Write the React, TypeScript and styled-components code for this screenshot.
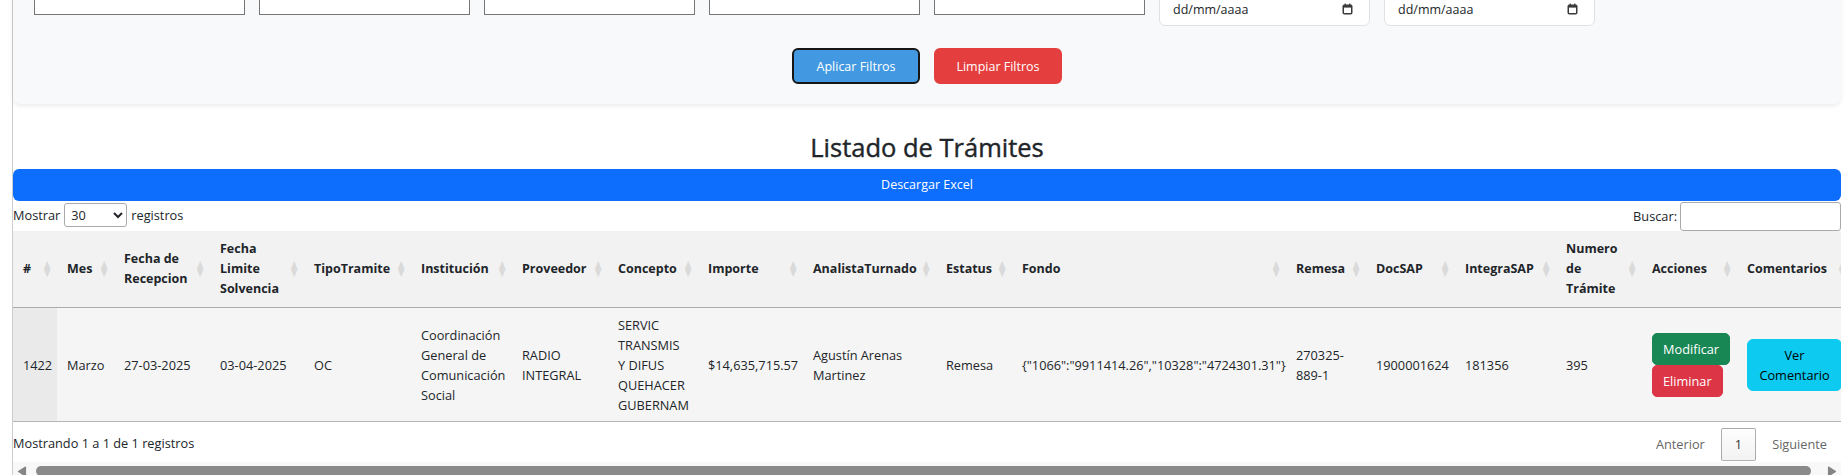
import React from "react";
import styled, { createGlobalStyle, css } from "styled-components";

const GlobalStyle = createGlobalStyle`
  html, body { margin: 0; padding: 0; overflow: hidden; background: #fff; }
  body {
    font-family: "Open Sans", "Noto Sans", sans-serif;
    font-size: 12.75px;
    color: #212529;
  }
  *, *::before, *::after { box-sizing: border-box; }
`;

const Page = styled.div`
  padding: 0 7px 0 12px;
`;

const Main = styled.main`
  border-left: 1px solid #cdcdcd;
  min-height: 100vh;
`;

/* ---------- filter card ---------- */
const FilterCard = styled.section`
  margin-top: -29px;
  background: #f8f9fa;
  border-radius: 8px;
  box-shadow: 0 2px 4px rgba(0, 0, 0, 0.08);
  padding: 21px 21px 20px;
`;

const FilterGrid = styled.div`
  display: grid;
  grid-template-columns: repeat(8, 1fr);
  column-gap: 14px;
  align-items: start;
`;

const TextField = styled.input`
  display: block;
  width: 100%;
  height: 23px;
  border: 1px solid #767676;
  border-radius: 0;
  background: #fff;
  padding: 1px 3px;
  font: inherit;
`;

const DateField = styled.div`
  display: flex;
  align-items: center;
  justify-content: space-between;
  height: 34px;
  padding: 0 16px 0 13px;
  background: #fff;
  border: 1px solid #dee2e6;
  border-radius: 6px;
  font-size: 12.5px;
  color: #212529;
`;

const ButtonRow = styled.div`
  display: flex;
  justify-content: center;
  gap: 14px;
  margin-top: 22px;
`;

const FilterButton = styled.button<{ $variant: "apply" | "clear" }>`
  width: 128px;
  height: 36px;
  border-radius: 6px;
  font-family: inherit;
  font-size: 12.5px;
  color: #fff;
  cursor: pointer;
  ${(p) =>
    p.$variant === "apply"
      ? css`
          background: #4299e1;
          border: 2px solid #161616;
        `
      : css`
          background: #e53e3e;
          border: 2px solid #e53e3e;
        `}
`;

/* ---------- title & export ---------- */
const Title = styled.h2`
  margin: 28px 0 6px;
  text-align: center;
  font-size: 25.5px;
  font-weight: 400;
  -webkit-text-stroke: 0.4px #212529;
  line-height: 1.2;
  color: #212529;
`;

const ExportButton = styled.button`
  display: block;
  width: 100%;
  height: 32px;
  border: none;
  border-radius: 6px;
  background: #0d6efd;
  color: #fff;
  font-family: inherit;
  font-size: 12.5px;
  cursor: pointer;
`;

/* ---------- datatable wrapper ---------- */
const TableScroller = styled.div`
  margin-top: 1px;
  overflow: hidden;
`;

const TableWrapper = styled.div`
  width: 100%;
`;

const ControlsRow = styled.div`
  display: flex;
  justify-content: space-between;
  align-items: flex-start;
  height: 29px;
`;

const LengthLabel = styled.label`
  display: flex;
  align-items: center;
  gap: 4px;
  height: 26px;
  white-space: nowrap;
`;

const LengthSelect = styled.select`
  width: 63px;
  height: 24px;
  padding: 0 2px;
  border: 1px solid #aaa;
  border-radius: 3px;
  background: #fff;
  font-family: inherit;
  font-size: 12.75px;
  color: #212529;
`;

const SearchLabel = styled.label`
  display: flex;
  align-items: center;
  white-space: nowrap;
`;

const SearchInput = styled.input`
  width: 161px;
  height: 29px;
  margin-left: 3px;
  padding: 5px;
  border: 1px solid #aaa;
  border-radius: 3px;
  background: transparent;
  font: inherit;
`;

const DataTable = styled.table<{ $width: number }>`
  width: ${(p) => p.$width}px;
  table-layout: fixed;
  border-collapse: separate;
  border-spacing: 0;
`;

const Col = styled.col<{ $w: number }>`
  width: ${(p) => p.$w}px;
`;

const HeadCell = styled.th`
  position: relative;
  background: #f2f2f2;
  text-align: left;
  vertical-align: middle;
  font-weight: 700;
  font-size: 12.5px;
  line-height: 20px;
  padding: 8px 26px 8px 10px;
  border-bottom: 1px solid #ababab;
  color: #212529;

  &::before,
  &::after {
    position: absolute;
    right: 6px;
    font-family: "DejaVu Sans", sans-serif;
    font-size: 11px;
    line-height: 8px;
    font-weight: 400;
    transform: scaleX(0.8);
    color: #dadada;
  }
  &::before {
    content: "▲";
    bottom: 50%;
  }
  &::after {
    content: "▼";
    top: 50%;
  }
`;

const Cell = styled.td<{ $sorted?: boolean; $nowrap?: boolean }>`
  background: ${(p) => (p.$sorted ? "#eaeaea" : "#f5f5f5")};
  padding: 7px 10px 6px;
  line-height: 20px;
  vertical-align: middle;
  border-bottom: 1px solid #b5b5b5;
  white-space: ${(p) => (p.$nowrap ? "nowrap" : "normal")};
`;

const ActionStack = styled.div`
  display: flex;
  flex-direction: column;
  align-items: flex-start;
`;

const RowButton = styled.button<{ $tone: "success" | "danger" | "info" }>`
  padding: 5px 10px;
  font-family: inherit;
  font-size: 12.75px;
  line-height: 20px;
  border-radius: 5px;
  border: 1px solid;
  cursor: pointer;
  ${(p) =>
    p.$tone === "success"
      ? css`
          background: #198754;
          border-color: #198754;
          color: #fff;
        `
      : p.$tone === "danger"
      ? css`
          background: #dc3545;
          border-color: #dc3545;
          color: #fff;
        `
      : css`
          background: #0dcaf0;
          border-color: #0dcaf0;
          color: #000;
          border-radius: 6px;
        `}
`;

const FooterRow = styled.div`
  display: flex;
  justify-content: space-between;
  align-items: flex-start;
  padding-bottom: 1px;
`;

const Info = styled.div`
  padding-top: 11px;
  line-height: 20px;
`;

const Paginate = styled.div`
  display: flex;
  padding-top: 6px;
`;

const PageButton = styled.span<{ $current?: boolean }>`
  display: inline-block;
  margin-left: 2px;
  padding: 6px 13px;
  line-height: 19px;
  border: 1px solid transparent;
  border-radius: 2px;
  color: #666;
  ${(p) =>
    p.$current &&
    css`
      color: #333;
      border-color: rgba(0, 0, 0, 0.3);
      background: linear-gradient(to bottom, rgba(230, 230, 230, 0.05) 0%, rgba(0, 0, 0, 0.05) 100%);
    `}
`;

/* ---------- horizontal scrollbar ---------- */
const ScrollBar = styled.div`
  display: flex;
  align-items: flex-start;
  height: 15px;
  background: #f8f8f8;
`;

const ScrollArrow = styled.span`
  flex: 0 0 17px;
  height: 15px;
  display: block;
`;

const ScrollThumb = styled.div`
  flex: 1;
  height: 10px;
  margin: 4px 13px 0 6px;
  border-radius: 5px;
  background: #8a8a8a;
`;

const ArrowLeft = () => (
  <ScrollArrow>
    <svg width="17" height="15" viewBox="0 0 17 15" aria-hidden="true">
      <path d="M12.5 5 L5.5 9.5 L12.5 14 Z" fill="#858585" stroke="#858585" strokeLinejoin="round" strokeWidth="1.2" />
    </svg>
  </ScrollArrow>
);

const ArrowRight = () => (
  <ScrollArrow>
    <svg width="17" height="15" viewBox="0 0 17 15" aria-hidden="true">
      <path d="M4.5 5 L11.5 9.5 L4.5 14 Z" fill="#858585" stroke="#858585" strokeLinejoin="round" strokeWidth="1.2" />
    </svg>
  </ScrollArrow>
);

/* ---------- icons ---------- */
const CalendarIcon = () => (
  <svg width="11" height="12" viewBox="0 0 11 12" aria-hidden="true">
    <rect x="1.25" y="2.25" width="8.5" height="8.5" rx="1" fill="none" stroke="#3a3a3a" strokeWidth="1.5" />
    <rect x="1" y="2" width="9" height="2.6" fill="#3a3a3a" />
    <rect x="2.6" y="0.6" width="1.4" height="2" fill="#3a3a3a" />
    <rect x="7" y="0.6" width="1.4" height="2" fill="#3a3a3a" />
  </svg>
);

/* ---------- data ---------- */
type Column = { key: string; label: string; width: number };

const columns: Column[] = [
  { key: "id", label: "#", width: 44 },
  { key: "mes", label: "Mes", width: 57 },
  { key: "fechaRecepcion", label: "Fecha de Recepcion", width: 96 },
  { key: "fechaLimite", label: "Fecha Limite Solvencia", width: 94 },
  { key: "tipo", label: "TipoTramite", width: 107 },
  { key: "institucion", label: "Institución", width: 101 },
  { key: "proveedor", label: "Proveedor", width: 96 },
  { key: "concepto", label: "Concepto", width: 90 },
  { key: "importe", label: "Importe", width: 105 },
  { key: "analista", label: "AnalistaTurnado", width: 133 },
  { key: "estatus", label: "Estatus", width: 76 },
  { key: "fondo", label: "Fondo", width: 274 },
  { key: "remesa", label: "Remesa", width: 80 },
  { key: "docSap", label: "DocSAP", width: 89 },
  { key: "integraSap", label: "IntegraSAP", width: 101 },
  { key: "numero", label: "Numero de Trámite", width: 86 },
  { key: "acciones", label: "Acciones", width: 95 },
  { key: "comentarios", label: "Comentarios", width: 115 },
];

const row: Record<string, string> = {
  id: "1422",
  mes: "Marzo",
  fechaRecepcion: "27-03-2025",
  fechaLimite: "03-04-2025",
  tipo: "OC",
  institucion: "Coordinación General de Comunicación Social",
  proveedor: "RADIO INTEGRAL",
  concepto: "SERVIC TRANSMIS Y DIFUS QUEHACER GUBERNAM",
  importe: "$14,635,715.57",
  analista: "Agustín Arenas Martinez",
  estatus: "Remesa",
  fondo: '{"1066":"9911414.26","10328":"4724301.31"}',
  remesa: "270325-889-1",
  docSap: "1900001624",
  integraSap: "181356",
  numero: "395",
};

const tableWidth = columns.reduce((s, c) => s + c.width, 0);

export default function App() {
  return (
    <>
      <GlobalStyle />
      <Page>
        <Main>
          <FilterCard>
            <FilterGrid>
              {[0, 1, 2, 3, 4].map((i) => (
                <TextField key={i} type="text" />
              ))}
              {[0, 1].map((i) => (
                <DateField key={`d${i}`}>
                  <span>dd/mm/aaaa</span>
                  <CalendarIcon />
                </DateField>
              ))}
            </FilterGrid>
            <ButtonRow>
              <FilterButton $variant="apply">Aplicar Filtros</FilterButton>
              <FilterButton $variant="clear">Limpiar Filtros</FilterButton>
            </ButtonRow>
          </FilterCard>

          <Title>Listado de Trámites</Title>
          <ExportButton>Descargar Excel</ExportButton>

          <TableScroller>
            <TableWrapper>
              <ControlsRow>
                <LengthLabel>
                  Mostrar
                  <LengthSelect defaultValue="30">
                    <option value="10">10</option>
                    <option value="30">30</option>
                    <option value="50">50</option>
                  </LengthSelect>
                  registros
                </LengthLabel>
                <SearchLabel>
                  Buscar:
                  <SearchInput type="search" />
                </SearchLabel>
              </ControlsRow>

              <DataTable $width={tableWidth}>
                <colgroup>
                  {columns.map((c) => (
                    <Col key={c.key} $w={c.width} />
                  ))}
                </colgroup>
                <thead>
                  <tr>
                    {columns.map((c) => (
                      <HeadCell key={c.key}>{c.label}</HeadCell>
                    ))}
                  </tr>
                </thead>
                <tbody>
                  <tr>
                    {columns.map((c, i) => {
                      if (c.key === "acciones") {
                        return (
                          <Cell key={c.key}>
                            <ActionStack>
                              <RowButton $tone="success">Modificar</RowButton>
                              <RowButton $tone="danger">Eliminar</RowButton>
                            </ActionStack>
                          </Cell>
                        );
                      }
                      if (c.key === "comentarios") {
                        return (
                          <Cell key={c.key}>
                            <RowButton $tone="info">Ver Comentario</RowButton>
                          </Cell>
                        );
                      }
                      return (
                        <Cell key={c.key} $sorted={i === 0} $nowrap={c.key === "fondo" || c.key === "importe"}>
                          {row[c.key]}
                        </Cell>
                      );
                    })}
                  </tr>
                </tbody>
              </DataTable>

              <FooterRow>
                <Info>Mostrando 1 a 1 de 1 registros</Info>
                <Paginate>
                  <PageButton>Anterior</PageButton>
                  <PageButton $current>1</PageButton>
                  <PageButton>Siguiente</PageButton>
                </Paginate>
              </FooterRow>
            </TableWrapper>
          </TableScroller>
          <ScrollBar>
            <ArrowLeft />
            <ScrollThumb />
            <ArrowRight />
          </ScrollBar>
        </Main>
      </Page>
    </>
  );
}
